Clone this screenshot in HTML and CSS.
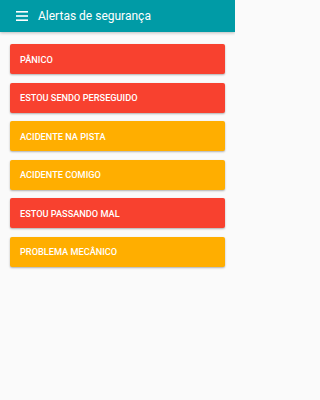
FILE: index.html
```html
<!DOCTYPE html>
<html lang="pt">
<head>
<meta charset="utf-8">
<link rel="stylesheet" href="styles.css">
</head>
<body>
<header class="appbar">
  <svg class="menu" width="12" height="10" viewBox="0 0 12 10"><rect x="0" y="0" width="12" height="1.6" fill="#fff"/><rect x="0" y="4.2" width="12" height="1.6" fill="#fff"/><rect x="0" y="8.4" width="12" height="1.6" fill="#fff"/></svg>
  <span class="title">Alertas de segurança</span>
</header>
<main class="list">
  <div class="card red">PÂNICO</div>
  <div class="card red">ESTOU SENDO PERSEGUIDO</div>
  <div class="card amber">ACIDENTE NA PISTA</div>
  <div class="card amber">ACIDENTE COMIGO</div>
  <div class="card red">ESTOU PASSANDO MAL</div>
  <div class="card amber">PROBLEMA MECÂNICO</div>
</main>
</body>
</html>
```
FILE: styles.css
```css
html, body { margin: 0; padding: 0; }
body {
  background: #fafafa;
  font-family: Roboto, "Liberation Sans", sans-serif;
  width: 235px;
  height: 400px;
}
.appbar {
  height: 32px;
  background: #009ba6;
  display: flex;
  align-items: center;
  padding-left: 16px;
  box-shadow: 0 1px 3px rgba(0,0,0,0.25);
}
.menu { display: block; margin-right: 10px; }
.title { color: #fff; font-size: 12px; }
.list {
  display: flex;
  flex-direction: column;
  gap: 8.6px;
  padding: 12px 10px 0;
}
.card {
  height: 30px;
  display: flex;
  align-items: center;
  padding-left: 10px;
  color: #fff;
  font-size: 9.2px;
  font-weight: 500;
  border-radius: 2px;
  box-shadow: 0 1px 2px rgba(0,0,0,0.3);
}
.red { background: #f8412f; }
.amber { background: #ffae00; }
```
